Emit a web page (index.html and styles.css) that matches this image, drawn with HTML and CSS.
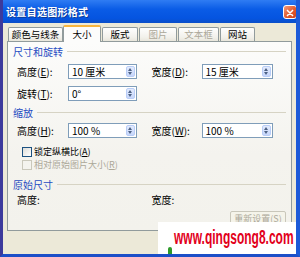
FILE: index.html
```html
<!DOCTYPE html>
<html lang="zh-CN">
<head>
    <meta charset="UTF-8">
    <title>设置自选图形格式</title>
    <link rel="stylesheet" href="styles.css">
</head>
<body>
    <div class="window">
        <div class="titlebar">
            <span class="title">设置自选图形格式</span>
            <span class="close-btn">
                <svg width="14" height="14" viewBox="0 0 14 14">
                    <path d="M4 4 L10 10 M10 4 L4 10" stroke="#fff" stroke-width="1.8" stroke-linecap="round"/>
                </svg>
            </span>
        </div>

        <div class="client">
            <div class="tabs">
                <div class="tab t1">颜色与线条</div>
                <div class="tab t2 active">大小</div>
                <div class="tab t3">版式</div>
                <div class="tab t4 disabled">图片</div>
                <div class="tab t5 disabled">文本框</div>
                <div class="tab t6">网站</div>
            </div>

            <div class="panel">
                <div class="group-title"><span>尺寸和旋转</span></div>
                <div class="row first">
                    <div class="field">
                        <label>高度(<u>E</u>):</label>
                        <div class="spin"><span class="val">10 厘米</span><span class="arrows"></span></div>
                    </div>
                    <div class="field right">
                        <label>宽度(<u>D</u>):</label>
                        <div class="spin wide"><span class="val">15 厘米</span><span class="arrows"></span></div>
                    </div>
                </div>
                <div class="row second">
                    <div class="field">
                        <label>旋转(<u>T</u>):</label>
                        <div class="spin"><span class="val">0°</span><span class="arrows"></span></div>
                    </div>
                </div>

                <div class="group-title scale"><span>缩放</span></div>
                <div class="row third">
                    <div class="field">
                        <label>高度(<u>H</u>):</label>
                        <div class="spin"><span class="val">100 %</span><span class="arrows"></span></div>
                    </div>
                    <div class="field right">
                        <label>宽度(<u>W</u>):</label>
                        <div class="spin wide"><span class="val">100 %</span><span class="arrows"></span></div>
                    </div>
                </div>
                <div class="checks">
                    <div class="check"><span class="box"></span>锁定纵横比(<u>A</u>)</div>
                    <div class="check off"><span class="box"></span>相对原始图片大小(<u>R</u>)</div>
                </div>

                <div class="group-title orig"><span>原始尺寸</span></div>
                <div class="row plain">
                    <div class="field"><label>高度:</label></div>
                    <div class="field right"><label>宽度:</label></div>
                </div>
                <div class="btn-row">
                    <div class="btn">重新设置(<u>S</u>)</div>
                </div>
            </div>
        </div>

        <div class="watermark">
            <span class="leaf"></span>
            <span class="wm-text">www.qingsong8.com</span>
        </div>
    </div>
</body>
</html>
```

FILE: styles.css
```css
* {
    box-sizing: border-box;
    margin: 0;
    padding: 0;
}

body {
    width: 300px;
    height: 257px;
    overflow: hidden;
    font-family: "Noto Sans CJK SC", "DejaVu Sans", sans-serif;
    font-size: 10px;
    color: #000;
    background: #ece9d8;
}

.window {
    position: relative;
    width: 300px;
    height: 257px;
    overflow: hidden;
    background: #ece9d8;
    border-left: 3px solid #3c3a9c;
    border-right: 4px solid #1c5ad8;
    border-bottom: 3px solid #1c4fc8;
}

.titlebar {
    height: 23px;
    margin-left: -3px;
    margin-right: -4px;
    display: flex;
    align-items: center;
    justify-content: space-between;
    padding: 0 3px 0 6px;
    background: linear-gradient(#2f7cf3, #0a5ce6 40%, #0554e0 80%, #0b4fc8);
}

.title {
    color: #fff;
    font-weight: bold;
    font-size: 10px;
    letter-spacing: 0.3px;
    text-shadow: 1px 1px 0 #0a3a9a;
}

.close-btn {
    width: 14px;
    height: 14px;
    border: 1px solid #fff;
    border-radius: 3px;
    background: linear-gradient(135deg, #f19a7c, #e35b2f 55%, #c9431d);
    display: flex;
}

.client {
    padding: 1px 4px 0 4px;
}

.tabs {
    display: flex;
    align-items: flex-end;
    height: 17px;
    padding-left: 1px;
}

.tab {
    height: 14px;
    border: 1px solid #919b9c;
    border-bottom: none;
    border-radius: 2px 2px 0 0;
    background: linear-gradient(#fefefe, #f2f1eb 70%, #e8e6dc);
    text-align: center;
    line-height: 13px;
    font-size: 9.5px;
    margin-right: 1px;
}

.t1 { width: 55px; }
.t2 { width: 38px; }
.t3 { width: 36px; }
.t4 { width: 38px; }
.t5 { width: 41px; }
.t6 { width: 35px; }

.tab.active {
    height: 17px;
    margin: 0 1px -1px -1px;
    position: relative;
    background: #fcfcfb;
    border-top: 2px solid #f7b53f;
    line-height: 14px;
}

.tab.disabled {
    color: #aca899;
}

.panel {
    height: 190px;
    border: 1px solid #919b9c;
    background: linear-gradient(#fcfcfb, #f4f3ee 60%, #f3f2ec);
    padding: 3px 5px 0 5px;
}

.group-title {
    display: flex;
    align-items: center;
    height: 12px;
    color: #1f4bc2;
}

.group-title::after {
    content: "";
    flex: 1;
    height: 1px;
    margin-left: 4px;
    background: #d6d3c4;
}

.group-title.scale { margin-top: 5px; }
.group-title.orig { margin-top: 7px; }

.row {
    display: flex;
    align-items: center;
    padding-left: 4px;
}

.row.first { margin-top: 7px; }
.row.second { margin-top: 7px; }
.row.third { margin-top: 5px; }
.row.plain { margin-top: 4px; height: 12px; }

.field {
    display: flex;
    align-items: center;
    width: 148px;
}

.field label {
    width: 51px;
    line-height: 12px;
}

.field.right label {
    width: 50px;
}

.spin {
    width: 69px;
    height: 15px;
    border: 1px solid #7f9db9;
    background: #fff;
    display: flex;
    align-items: center;
    justify-content: space-between;
    padding: 0 1px 0 3px;
}

.spin.wide {
    width: 71px;
}

.val {
    line-height: 12px;
}

.arrows {
    width: 9px;
    height: 11px;
    border-radius: 2px;
    border: 1px solid #b9cdf7;
    background: linear-gradient(#e3ebfd, #c6d6fb);
    position: relative;
}

.arrows::before,
.arrows::after {
    content: "";
    position: absolute;
    left: 1px;
    border-left: 2.5px solid transparent;
    border-right: 2.5px solid transparent;
}

.arrows::before {
    top: 1px;
    border-bottom: 3px solid #4d6185;
}

.arrows::after {
    bottom: 1px;
    border-top: 3px solid #4d6185;
}

.checks {
    margin-top: 7px;
    margin-left: 9px;
}

.check {
    display: flex;
    align-items: center;
    height: 13px;
    font-size: 9px;
    line-height: 11px;
}

.check .box {
    width: 10px;
    height: 10px;
    border: 1px solid #1c5180;
    background: linear-gradient(135deg, #dcdcd7, #fff);
    margin-right: 2px;
}

.check.off {
    color: #aca899;
}

.check.off .box {
    border-color: #cac8bb;
    background: #f4f3ee;
}

.btn-row {
    display: flex;
    justify-content: flex-end;
    margin-top: 5px;
}

.btn {
    width: 56px;
    height: 15px;
    border: 1px solid #c9c7ba;
    border-radius: 2px;
    background: #f5f4ea;
    color: #aca899;
    text-align: center;
    line-height: 13px;
    font-size: 9px;
}

.watermark {
    position: absolute;
    left: 155px;
    top: 222px;
    width: 145px;
    height: 35px;
    background: #fff;
}

.leaf {
    position: absolute;
    left: 10px;
    top: 25px;
    width: 4px;
    height: 10px;
    background: #2e9a2a;
    border-radius: 2px 2px 0 0;
}

.wm-text {
    position: absolute;
    left: 16px;
    top: 3px;
    font-family: "Liberation Sans", Arial, sans-serif;
    font-weight: bold;
    font-size: 20px;
    line-height: 24px;
    color: #e2001b;
    transform: scaleX(0.6);
    transform-origin: left top;
    white-space: nowrap;
}
```
